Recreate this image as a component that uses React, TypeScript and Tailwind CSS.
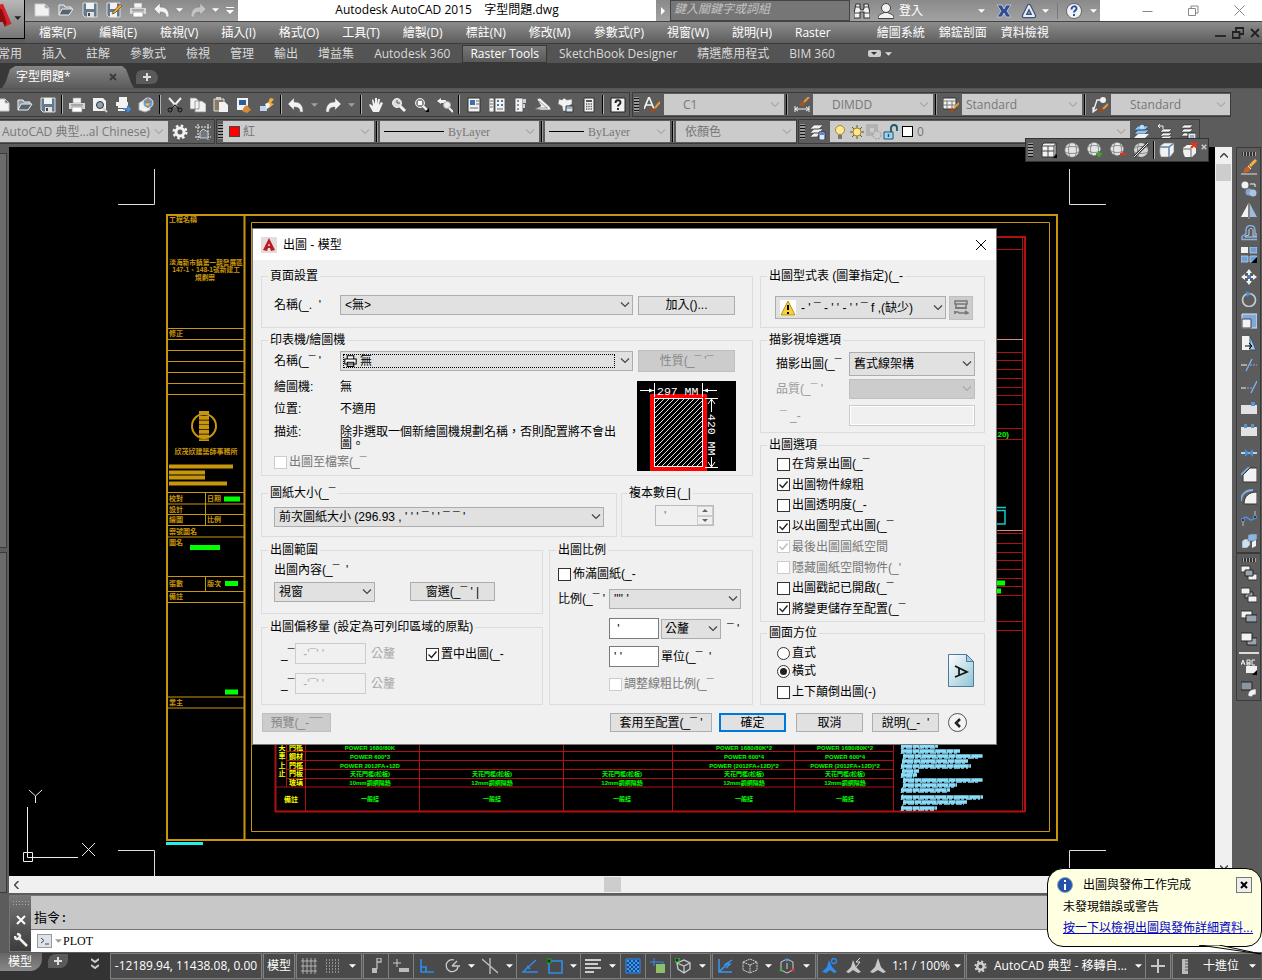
import type { ReactNode } from "react";

const W = "#f2f2f2";
const B = "#3f92e8";
const L = "#bcd6f2";

const art: Record<string, ReactNode> = {
  new: <path d="M1 2h10l4 4v8H1z M11 2v4h4" fill={W} stroke="#c9c9c9" />,
  open: <><path d="M1 13V3h5l1 2h6v3" fill="#8b97a3" stroke={W} /><path d="M1 13l3-6h11l-4 6z" fill="#59636d" stroke={W} /></>,
  save: <><path d="M1 1h14v14H3l-2-2z" fill="#66788c" stroke="#d6dde3" /><path d="M4 1h8v6H4z" fill={W} /><path d="M5 10h7v5H5z" fill="#e0e0e0" /><path d="M6 11h2v3H6z" fill="#444" /></>,
  saveas: <><path d="M1 1h13v14H3l-2-2z" fill="#66788c" stroke="#d6dde3" /><path d="M4 1h7v6H4zM4 10h7v5H4z" fill={W} /><path d="M7 10l7-8 2 2-7 7-3 1z" fill="#f0a535" stroke="#6b4a1c" strokeWidth=".7" /></>,
  print: <><path d="M4 1h8v5H4z" fill={W} stroke="#999" strokeWidth=".6" /><path d="M0 6h16v6H0z" fill="#d6d6d6" /><path d="M2 8h12" stroke="#777" /><path d="M3 10h10v5H3z" fill="#fff" stroke="#888" strokeWidth=".7" /></>,
  undo: <path d="M0 7l6-6v4c6 0 9 3 9 10h-3c0-4-2-5-6-5v3z" fill={W} stroke="#777" strokeWidth=".5" />,
  redo: <path d="M16 7l-6-6v4c-6 0-9 3-9 10h3c0-4 2-5 6-5v3z" fill={W} stroke="#777" strokeWidth=".5" />,
  preview: <><path d="M1 1h10l3 3v10H1z" fill={W} /><circle cx="8" cy="8" r="3.5" fill="#8fa2b5" stroke="#333" /><path d="M11 11l4 4" stroke="#ccc" strokeWidth="2" /></>,
  publish: <><path d="M4 0h8v5H4zM1 5h12v4H1z" fill={W} /><path d="M3 10h9M3 13h7" stroke={W} strokeWidth="2" /><path d="M8 12h6m-2-3l3 3-3 3" stroke={B} strokeWidth="1.6" fill="none" /></>,
  globe3: <><path d="M1 6l5-3 6 2v8l-5 2-6-2z" fill={W} stroke="#aaa" /><circle cx="10" cy="6" r="5" fill="#5aa7d8" stroke="#e8e8e8" /><path d="M10 1v10M6 4c3 2 6 2 8 0" stroke="#e05b2e" fill="none" /><path d="M7 7l3 2 2-3z" fill="#f4cf3a" /></>,
  cut: <><path d="M2 1l8 9M14 1L6 10" stroke={W} strokeWidth="2" /><path d="M8 8l4 4M8 8l-4 4" stroke="#222" strokeWidth="1.4" /><circle cx="3" cy="13" r="2" stroke="#111" fill="none" /><circle cx="13" cy="13" r="2" stroke="#111" fill="none" /></>,
  copy: <path d="M0 1h6l3 3v8H0zM5 4h7l4 3v8H5z" fill={W} stroke="#888" strokeWidth=".8" />,
  paste: <><path d="M1 2h10v12H1z" fill="#8a7a64" stroke="#ddd" /><path d="M3 0h5v3H3z" fill="#ccc" /><path d="M6 5h6l3 3v7H6z" fill={W} /></>,
  match: <><path d="M1 1h11v12H1z" fill={W} /><path d="M3 3h7v5H3z" fill="#2a5c9e" /><path d="M8 10l3-2 4 5-4 3-5-2z" fill="#d88a37" /></>,
  block: <><path d="M1 9h7v5H1z" fill={L} /><path d="M6 7l4-2 2 4-4 3z" fill={W} /><path d="M11 1l4 1-3 4 3 1-5 4 1-4-2-1z" fill="#f2b13e" /></>,
  hand: <path d="M5 15L1 8l1-1 3 2L4 3l1-1 2 5V1h2v6l1-5h2l-1 6 2-3 2 1-4 9z" fill={W} />,
  zoom: <><circle cx="6" cy="6" r="4.5" fill="#ddd" stroke={W} /><path d="M6 3v3h3" stroke="#555" fill="none" /><path d="M9 9l5 5" stroke={W} strokeWidth="3" /></>,
  zoomwin: <><circle cx="6" cy="6" r="4.5" fill="#888" stroke={W} /><path d="M4 4h4v4H4z" fill="#fff" /><path d="M9 9l4 4" stroke={W} strokeWidth="2.4" /><path d="M15 11v4h-4z" fill="#000" /></>,
  zoomprev: <><path d="M0 4l4-3v2h5v3H4v1z" fill={W} /><circle cx="10" cy="8" r="3.5" fill="#e7edf3" stroke="#aaa" /><path d="M12 11l4 4" stroke={W} strokeWidth="2" /></>,
  props: <><path d="M2 1h12v14H2z" fill={W} stroke="#333" /><path d="M4 3h5v5H4z" fill="#3c6fae" /><path d="M10 4h3M10 7h3M4 11h8" stroke="#666" /></>,
  dcenter: <><path d="M0 1h5v14H0zM6 1h10v14H6z" fill={W} stroke="#444" strokeWidth=".8" /><path d="M1 4h3M1 7h3M1 10h3" stroke="#5c6f84" /><path d="M8 3h2v2H8zM12 3h2v2h-2zM8 7h2v2H8zM12 7h2v2h-2z" fill="#5b7696" /><path d="M8 11h6v2H8z" fill="#aaa" /></>,
  palette: <><path d="M3 1h8v14H3z" fill={W} stroke="#444" strokeWidth=".8" /><path d="M5 3h2v2H5zM5 7h2v2H5zM5 11h2v2H5z" fill="#8295a9" /><path d="M11 2h3v4h-3zM11 7h2v4h-2z" fill="#cfcfcf" /></>,
  sheet: <><path d="M2 2l3-1 10 9 1 3H6L0 12l6-3z" fill={W} stroke="#666" strokeWidth=".7" /><path d="M2 11h11M4 4l8 7" stroke="#888" strokeWidth=".8" /></>,
  markup: <><path d="M1 2l3 1 2-2 3 2 5-1v5l-3 2 1 5H5L4 9 0 7z" fill={W} stroke="#666" strokeWidth=".6" /><path d="M8 9h7v6H8z" fill="#dce4ec" stroke="#333" /><path d="M8 11h7" stroke="#5f7c9f" /></>,
  calc: <><path d="M3 1h10v14H3z" fill={W} stroke="#333" /><path d="M5 3h6v2H5z" fill="#555" /><path d="M5 7h6M5 9.5h6M5 12h6" stroke="#555" strokeDasharray="1.3 1" strokeWidth="1.3" /></>,
  help: <><path d="M1 1h14v14H1z" fill={W} stroke="#222" /><path d="M5.500 6c0-3.500 5-3.500 5-.5 0 2-2.500 2-2.500 4M8 11v2" stroke="#222" strokeWidth="1.9" fill="none" /></>,
  textstyle: <><path d="M0 12L5 0l5 12M2 8h6" stroke={W} strokeWidth="1.7" fill="none" /><path d="M16 5l-5 6" stroke="#e79a3a" strokeWidth="2" /><path d="M5 15l3-4 4 1-2 3z" fill="#9b4b1c" /></>,
  dimstyle: <><path d="M1 9v6M15 9v6M1 12h14M4 10l-3 2 3 2M12 10l3 2-3 2" stroke={W} fill="none" /><path d="M15 0l-5 5" stroke="#e79a3a" strokeWidth="2" /><path d="M5 8l3-4 3 2-2 3z" fill="#b3521e" /></>,
  tablestyle: <><path d="M0 1h13v11H0z" fill={W} stroke="#333" /><path d="M0 4h13M0 8h13M4 4v8M9 4v8" stroke="#777" /><path d="M16 6l-5 5" stroke="#e79a3a" strokeWidth="2" /><path d="M6 15l3-4 3 2-2 3z" fill="#9b4b1c" /></>,
  mleader: <><path d="M1 15L5 3h5M1 10v5l4-3" stroke={W} fill="none" strokeWidth="1.300" /><circle cx="11" cy="3" r="3" fill={W} /><path d="M16 7l-5 5" stroke="#e79a3a" strokeWidth="2" /><path d="M6 15l3-4 3 2-2 3z" fill="#9b4b1c" /></>,
  gear: <><circle cx="8" cy="8" r="4" fill="none" stroke={W} strokeWidth="3" /><circle cx="8" cy="8" r="6.300" fill="none" stroke={W} strokeWidth="2.400" strokeDasharray="2.500 2.450" /></>,
  space: <><path d="M3 0v16M13 0v16M0 3h16M0 13h16" stroke={W} strokeDasharray="2 1" /><path d="M5 14V8l3-3 5 3v6z" fill="#6f7880" stroke="#ccc" /></>,
  layers: <><path d="M4 1h9L9 5H0zM4 5h9L9 9H0zM4 9h6l-3 4H0z" fill={W} stroke="#444" strokeWidth=".6" /><path d="M9 8h6v8H9z" fill="#dfeaf5" stroke="#335" /><path d="M10 10h4" stroke={B} strokeWidth="2" /></>,
  layup: <><path d="M4 2h11l-4 4H0zM4 6h11l-4 4H0z" fill="#8fc0ee" stroke="#245" strokeWidth=".6" /><path d="M4 10h11l-4 4H0z" fill={W} /><circle cx="8" cy="3" r="2.300" fill="#b9ddff" /></>,
  layprev: <><path d="M6 5h9l-3 3H3zM6 9h9l-3 3H3zM6 12h9l-3 3H3z" fill={W} stroke="#333" strokeWidth=".6" /><path d="M1 2h5v3M3 0L1 2l2 2" stroke={W} fill="none" /></>,
  laystate: <><path d="M4 1h9l-3 3H1zM4 5h9l-3 3H1zM4 9h9l-3 3H1z" fill={W} stroke="#333" strokeWidth=".6" /><path d="M8 9h8v7H8z" fill="#dfe7ef" stroke="#333" /><path d="M10 12h4M10 14h4" stroke="#678" /></>,
  bulb: <><circle cx="8" cy="6" r="4.500" fill="#ffe79a" stroke="#a8872b" /><path d="M6 11h4v4H6z" fill="#777" /></>,
  sun: <><path d="M8 1v14M1 8h14M3 3l10 10M13 3L3 13" stroke="#6b5416" /><circle cx="8" cy="8" r="4" fill="#ffe68a" stroke="#a8872b" /></>,
  vpfreeze: <><path d="M1 1h10v10H1zM3 3h6v6H3z" fill="none" stroke="#aaa" strokeWidth="1.500" /><circle cx="11" cy="11" r="4" fill="#cbcbcb" stroke="#999" strokeDasharray="2 1" /></>,
  unlock: <><path d="M1 8h9v7H1z" fill="#9ed5f1" stroke="#1d546e" /><path d="M8 8V4c0-4 6-4 6 0v3" stroke="#1d546e" strokeWidth="1.800" fill="none" /><path d="M5.500 10v3" stroke="#1d546e" strokeWidth="1.500" /></>,
  box: <><path d="M1 3l2-2h12v11l-2 3H1z" fill={W} stroke="#333" /><path d="M1 4h12v11M13 4l2-3M7 4v11M1 9h12" stroke="#444" fill="none" /><path d="M16 12v4h-4z" fill="#000" /></>,
  globe: <><circle cx="8" cy="8" r="7" fill="#e4e4e4" stroke="#aaa" strokeWidth=".5" /><path d="M1 6c4-2 10-2 14 0M1 10c4 2 10 2 14 0M6 1c-2 5-2 9 0 14M11 1c2 5 2 9 0 14" stroke="#777" fill="none" strokeWidth=".8" /></>,
  globeadd: <><circle cx="7" cy="7" r="6.500" fill="#e4e4e4" /><path d="M1 5c4-2 9-2 12 0M1 9c4 2 9 2 12 0M5 1c-2 5-2 8 0 12M10 1c2 5 2 8 0 12" stroke="#777" fill="none" strokeWidth=".8" /><path d="M12 9v6M9 12h6" stroke="#43a52b" strokeWidth="2.200" /></>,
  globesub: <><circle cx="7" cy="7" r="6.500" fill="#e4e4e4" /><path d="M1 5c4-2 9-2 12 0M1 9c4 2 9 2 12 0M5 1c-2 5-2 8 0 12M10 1c2 5 2 8 0 12" stroke="#777" fill="none" strokeWidth=".8" /><path d="M10 12h6" stroke="#e0331f" strokeWidth="2.200" /></>,
  globeoff: <><circle cx="8" cy="8" r="7" fill="#d4d4d4" /><path d="M1 6c4-2 10-2 14 0M1 10c4 2 10 2 14 0M6 1c-2 5-2 9 0 14" stroke="#777" fill="none" strokeWidth=".8" /><path d="M15 1L1 15" stroke="#333" strokeWidth="2.500" /><path d="M15 1L1 15" stroke="#eee" /></>,
  cube: <><path d="M1 4l4-3h10v9l-4 5H2c-2-4-1-8-1-11z" fill={W} stroke="#777" strokeWidth=".6" /><path d="M1 5h9l5-4M10 5v10" stroke="#5b83ad" fill="none" strokeWidth="1.500" /></>,
  cubex: <><path d="M1 6l4-3h9v8l-4 4H3c-2-3-2-6-2-9z" fill={W} /><path d="M1 7h8v8" stroke="#666" fill="none" /><path d="M9 0l6 6M15 0L9 6" stroke="#e5341f" strokeWidth="2.200" /></>,
  brush: <><path d="M0 15h16" stroke="#ddd" /><path d="M15 1l-7 7" stroke="#f1b145" strokeWidth="3" /><path d="M8 6l3 3-4 4-5 1 2-5z" fill="#c5622a" /><path d="M7 7l3 3" stroke="#eee" /></>,
  copy2: <><circle cx="4" cy="4" r="3.500" fill={W} /><circle cx="8" cy="11" r="3.500" fill="#86a6cc" /><circle cx="12" cy="12" r="3.500" fill="#a9c6e8" /><path d="M9 3h5v3" stroke={W} fill="none" /></>,
  mirror: <><path d="M7 1v13H0z" fill={W} /><path d="M9 1v13h7z" fill="#9dbbdd" /><path d="M8 0v16" stroke="#ccc" strokeWidth=".7" /></>,
  offset: <><path d="M16 14.500H1v-3l4-3V5c0-6 9-6 9 0v4h2" stroke="#85b3ea" fill="none" strokeWidth="1.400" /><path d="M16 12H4v-1l4-1V5c0-2 4-2 4 0v6h4" stroke="#b9d4f2" fill="none" /></>,
  array: <><path d="M0 0h7v6H0z" fill={W} /><path d="M9 0h7v6H9zM0 9h7v6H0zM9 9h7v6H9z" fill="#6f9fd8" stroke="#b7d3f3" strokeWidth=".8" /><path d="M16 10v6h-6z" fill="#000" /></>,
  move: <><path d="M8 0l3 4H9v8h2l-3 4-3-4h2V4H5zM0 8l4-3v2h8V5l4 3-4 3V9H4v2z" fill={W} /><path d="M6 6h4v4H6z" fill="#467ab8" /></>,
  rotate: <><circle cx="8" cy="9" r="6.500" fill="none" stroke="#c3cad1" strokeWidth="1.700" /><path d="M5 0l5 3-4 3z" fill={B} /></>,
  scale: <><path d="M1 1h15v14H1z" fill="#7fa9db" stroke="#d9e6f5" /><path d="M1 6h9v9H1z" fill={W} stroke="#445" /></>,
  stretch: <><path d="M1 1h8v14H1z" fill={W} /><path d="M9 1l6 14H9z" fill="#9dc3ee" stroke="#356" /><path d="M4 11h6M8 8l3 3-3 3" stroke="#000" fill="none" /></>,
  trim: <><path d="M0 8h6" stroke={W} /><path d="M9 8h7" stroke="#7fb0ea" strokeDasharray="2 1" /><path d="M5 14L11 2" stroke="#7fb0ea" strokeWidth="1.400" /></>,
  extend: <><path d="M0 9h5" stroke={W} /><path d="M6 9h5" stroke="#7fb0ea" strokeDasharray="2 1" /><path d="M10 14l6-12" stroke="#7fb0ea" strokeWidth="1.400" /></>,
  break1: <><path d="M0 4h16v9H0z" fill="#e2e2e2" /><path d="M10 1h4v4h-4z" fill="#5b91d6" /></>,
  break2: <><path d="M0 4h16v9H0z" fill="#e2e2e2" /><path d="M3 1h3v4H3zM10 1h3v4h-3z" fill="#5b91d6" /></>,
  join: <><path d="M0 8h16" stroke={W} strokeWidth="1.500" /><path d="M4 4l4 4-4 4zM12 4L8 8l4 4z" fill={B} /></>,
  chamfer: <><path d="M2 15V8l7-7h7v14z" fill={W} stroke="#333" /><path d="M0 8l8-8" stroke="#7fb0ea" strokeWidth="1.600" /></>,
  fillet: <><path d="M3 15C3 7 8 3 16 3v12z" fill={W} stroke="#333" /><path d="M0 12C0 5 5 1 12 1" stroke="#7fb0ea" fill="none" strokeWidth="2" /></>,
  blend: <><path d="M2 9c3-9 7 6 12-3" stroke="#4f8fdc" fill="none" strokeWidth="1.400" /><path d="M2 15V9M14 6V0" stroke="#bbb" /><circle cx="2" cy="9" r="1.800" fill="#123d80" stroke="#9bc" strokeWidth=".6" /><circle cx="14" cy="6" r="1.800" fill="#123d80" stroke="#9bc" strokeWidth=".6" /></>,
  explode: <><path d="M1 8l3-2h5v6l-3 3H1z" fill="#cfe0f3" stroke="#567" strokeWidth=".5" /><path d="M7 2l3-1h6v5l-3 2H7z" fill="#8db5e1" stroke="#567" strokeWidth=".5" /><path d="M11 9l4-2v6l-4 2z" fill={W} /></>,
  front: <><path d="M0 1h9v6H0zM7 9h9v6H7z" fill={W} stroke="#333" /><path d="M4 5h8v6H4z" fill="#9aa5b0" stroke="#222" /></>,
  back: <><path d="M4 5h8v6H4z" fill="#9aa5b0" stroke="#222" /><path d="M0 1h9v6H0zM7 9h9v6H7z" fill={W} stroke="#333" /></>,
  above: <><path d="M0 2h11v7H0z" fill={W} stroke="#333" /><path d="M5 6h11v7H5z" fill="#98a3ad" stroke="#222" /></>,
  under: <><path d="M6 7h10v7H6z" fill="#98a3ad" stroke="#222" /><path d="M0 2h11v8H0z" fill={W} stroke="#222" /></>,
  abc: <><path d="M5 7h11v7H5z" fill={W} /><path d="M0 6l2-5 2 5M1 4h2M6 1v5h3V4H6h3V1zM14 1h-3v5h3" stroke={W} fill="none" /><path d="M16 11v5h-5z" fill="#000" /></>,
  hatchback: <><path d="M0 1h11v8H0z" fill="#8b959e" stroke="#222" /><path d="M7 15c0-5 3-7 8-7v6c-3-1-4 1-4 2z" fill={W} stroke="#555" strokeWidth=".6" /></>,
  bino: <><path d="M2 1h4v4l1 2h2l1-2V1h4l2 9v5h-6V9H6v6H0v-5z" fill={W} stroke="#333" strokeWidth="1.100" /><path d="M0 10h6M10 10h6M2 4h4M10 4h4" stroke="#444" /></>,
  user: <><circle cx="8" cy="5" r="4.500" fill={W} stroke="#444" /><path d="M0 15.500c0-5 4-4 6-6h4c2 2 6 1 6 6z" fill={W} stroke="#444" /></>,
  exchange: <path d="M1 2h5l2 4 2-4h5l-4 6 4 6h-5l-2-4-2 4H1l4-6z" fill="#304d90" stroke="#c9d4e8" strokeWidth=".8" />,
  a360: <><path d="M8 3L3 13h10z" fill="none" stroke="#3d5378" strokeWidth="4.500" strokeLinejoin="round" /><path d="M8 3L3 13h10z" fill="none" stroke="#e8eef8" strokeWidth="2" strokeLinejoin="round" /></>,
  help2: <><circle cx="8" cy="8" r="7.500" fill={W} stroke="#444" strokeWidth=".7" /><path d="M5.500 6.500c0-4 5-4 5-1 0 2-2.500 2-2.500 4M8 11v2" stroke="#2753a6" strokeWidth="2" fill="none" /></>,
  grid: <path d="M2 0v16M6 0v16M10 0v16M14 0v16M0 3h16M0 8h16M0 13h16" stroke="#c8c8c8" strokeWidth=".8" />,
  dots: <path d="M1 2h15M1 5h15M1 8h15M1 11h15M1 14h15" stroke="#d8d8d8" strokeDasharray="1 2" />,
  infer: <><path d="M9 0h4v4H9zM9 2v9" stroke="#bbb" fill="none" strokeWidth="1.300" /><path d="M4 10h5v5H4z" fill="#bbb" /></>,
  dyn: <><path d="M4 1v8M0 5h8" stroke="#ccc" /><path d="M6 10h10v4H6z" fill="#bbb" /></>,
  ortho: <path d="M2 1v13h13M2 9h5v5" stroke="#2f8df0" fill="none" strokeWidth="1.600" />,
  polar: <path d="M14 9A6 6 0 1 1 10 2M8 8h8M8 8l5-5" stroke="#ccc" fill="none" strokeWidth="1.300" />,
  iso: <path d="M8 0v16M0 1l16 14" stroke="#bbb" strokeWidth="1.400" />,
  track: <path d="M0 14h16M2 13L14 2M5 8l3 3" stroke="#2f8df0" fill="none" strokeWidth="1.600" />,
  osnap: <><path d="M2 3h13v12H2z" stroke="#2f8df0" fill="none" strokeWidth="1.600" /><path d="M0 1h4v4H0z" fill="#063c06" stroke="#2a2" /></>,
  lwt: <path d="M0 2h16M0 6h13M0 10h16M0 14h9" stroke="#ccc" strokeWidth="2" />,
  transp: <><path d="M1 1h14v14H1z" fill="#1c4c86" stroke="#2f8df0" /><path d="M2 3h12M2 7h12M2 11h12" stroke="#3b97f5" strokeWidth="2" strokeDasharray="2 2" /><path d="M4 5h10M4 9h10M4 13h10" stroke="#3b97f5" strokeWidth="2" strokeDasharray="2 2" /></>,
  cycle: <><path d="M4 0v8M0 4h13v3" stroke="#2f8df0" fill="none" /><path d="M6 6h9v9H6z" fill="#8fbf6d" /></>,
  osnap3: <><path d="M2 5l7-3 6 3v6l-6 4-6-4zM2 5l7 3 6-3M9 8v7" stroke="#ccc" fill="none" strokeWidth="1.300" /><path d="M0 0h4v4H0z" fill="#063c06" stroke="#4c4" /></>,
  ucs: <path d="M2 1v13h13M2 14l8-8M15 2l-6 4h4l-4 4" stroke="#3b97f5" fill="none" strokeWidth="1.500" />,
  wirecube: <path d="M1 4l7-3 7 3v8l-7 3-7-3zM1 4l7 3 7-3M8 7v8" stroke="#ccc" fill="none" strokeDasharray="2 .6" />,
  gizmo: <><path d="M2 4l6-3 6 3v8l-6 3-6-3zM8 5v6" stroke="#ccc" fill="none" /><circle cx="8" cy="2" r="1.500" fill={B} /><circle cx="2" cy="12" r="1.500" fill="#3b3" /><circle cx="14" cy="12" r="1.500" fill="#e33" /></>,
  annoB: <><path d="M7 2l3 7 5 5-3 1-4-3-4 3-4-1 5-5z" fill="#2f8df0" /><circle cx="12" cy="3" r="2.500" fill="none" stroke="#2f8df0" strokeWidth="1.300" /></>,
  annoZ: <><path d="M7 2l3 7 5 5-3 1-5-3-4 3-3-1 5-5z" fill="#c8c8c8" /><path d="M14 0l-4 4h4l-4 5" stroke="#ddd" fill="none" /></>,
  anno: <path d="M8 0l3 9 5 5-3 1-5-3-5 3-3-1 5-5z" fill="#c8c8c8" />,
  plus: <path d="M8 1v14M1 8h14" stroke="#c8c8c8" strokeWidth="2" />,
  ruler: <><path d="M5 1h6v15H5z" fill="#bbb" /><path d="M8 3h3M8 6h3M8 9h3M8 12h3" stroke="#555" /></>,
  printer2: <><path d="M4 1h8v4H4zM1 5h14v6H1zM4 9h8v5H4z" fill="#fff" stroke="#000" strokeWidth="1.300" /></>,
  pen: <><path d="M2 1h12v3H2zM3 4h10v4H3z" stroke="#777" fill="none" strokeWidth="1.500" /><path d="M2 8h12M1 12h4l1 1h9M2 11v3M12 11l3 2-3 1" stroke="#777" fill="none" strokeWidth="1.600" /></>,
  warn: <><path d="M0 0h16v16H0z" fill="#fff" /><path d="M8 1l7 14H1z" fill="#f7d33a" stroke="#b58d12" /><path d="M8 5v5M8 12v2" stroke="#000" strokeWidth="2" /></>,
};

function Icon({ n }: { n: string }) {
  return (
    <svg viewBox="0 0 16 16" className="size-4 shrink-0" fill="none" aria-hidden="true">
      {art[n]}
    </svg>
  );
}

function Tool({ n, cls = "w-[23px]" }: { n: string; cls?: string }) {
  return (
    <button type="button" aria-label={n} className={`flex shrink-0 items-center justify-center ${cls}`}>
      <Icon n={n} />
    </button>
  );
}

function Tools({ names }: { names: string }) {
  return (
    <>
      {names.split(" ").map((n, i) =>
        n === "|" ? (
          <span key={i} className="my-[2px] flex w-[6px] justify-center">
            <span className="w-[2px] border-l border-black bg-[#b0b0b0]" />
          </span>
        ) : n === "v" ? (
          <Tri key={i} cls="w-[14px] text-[#a0a0a0]" />
        ) : (
          <Tool key={i} n={n} />
        ),
      )}
    </>
  );
}

function Tri({ cls }: { cls: string }) {
  return (
    <button type="button" aria-label="展開" className={`flex shrink-0 items-center justify-center ${cls}`}>
      <svg viewBox="0 0 8 4" className="h-1 w-[7px]" fill="currentColor" aria-hidden="true">
        <path d="M0 0h8L4 4z" />
      </svg>
    </button>
  );
}

function Chevron({ cls }: { cls: string }) {
  return (
    <svg viewBox="0 0 10 6" className={`pointer-events-none absolute top-1/2 h-[6px] w-[10px] -translate-y-1/2 ${cls}`} fill="none" stroke="currentColor" strokeWidth="1.200" aria-hidden="true">
      <path d="M1 .5l4 4 4-4" />
    </svg>
  );
}

function Grip() {
  return <span className="my-1 w-[5px] shrink-0 bg-[radial-gradient(#111_40%,#999_45%)] bg-[size:2px_3px]" />;
}

function Combo({ text, w, pad = "pl-[4px]", serif = false, label, children }: { text: string; w: string; pad?: string; serif?: boolean; label: string; children?: ReactNode }) {
  return (
    <div className={`relative flex h-[21px] shrink-0 items-center bg-[#cbcbcb] ${w}`}>
      {children}
      <select aria-label={label} className={`h-full w-full min-w-0 flex-1 appearance-none bg-transparent text-[#777] outline-none ${pad} ${serif ? "font-['Liberation_Serif',serif] text-xs" : "text-xs"}`}>
        <option>{text}</option>
      </select>
      <Chevron cls="right-1 text-[#aaa]" />
    </div>
  );
}

function Sep() {
  return <span className="mx-[2px] my-[1px] w-[2px] shrink-0 border-l border-black bg-[#999]" />;
}

function Select({ label, text, w, h = "h-5", disabled = false, pad = "pl-1", children }: { label: string; text: string; w: string; h?: string; disabled?: boolean; pad?: string; children?: ReactNode }) {
  return (
    <div className={`relative shrink-0 ${w} ${h}`}>
      <select id={label} aria-label={label} disabled={disabled} className={`block size-full appearance-none border text-xs leading-4 outline-none ${pad} ${disabled ? "border-[#bfbfbf] bg-[#cccccc] text-[#888]" : "border-[#adadad] bg-[#e1e1e1] text-black"}`}>
        <option>{text}</option>
      </select>
      {children}
      <Chevron cls={`right-[3px] ${disabled ? "text-[#aaa]" : "text-[#444]"}`} />
    </div>
  );
}

function Btn({ children, w, h = "h-[19px]", disabled = false, primary = false }: { children: ReactNode; w: string; h?: string; disabled?: boolean; primary?: boolean }) {
  return (
    <button type="button" disabled={disabled} className={`flex shrink-0 items-center justify-center whitespace-pre text-xs leading-4 ${w} ${h} ${primary ? "border-2 border-[#0078d7] bg-[#e1e1e1]" : disabled ? "border border-[#bfbfbf] bg-[#cccccc] text-[#888]" : "border border-[#adadad] bg-[#e1e1e1]"}`}>
      {children}
    </button>
  );
}

function Check({ text, on = false, disabled = false, radio = false }: { text: string; on?: boolean; disabled?: boolean; radio?: boolean }) {
  return (
    <label className={`flex h-[14px] items-center gap-[2px] whitespace-pre ${disabled ? "text-[#777]" : ""}`}>
      <span className="relative size-[13px] shrink-0">
        <input type={radio ? "radio" : "checkbox"} name={radio ? "orientation" : undefined} defaultChecked={on} disabled={disabled} className={`peer block size-[13px] appearance-none border bg-white ${radio ? "rounded-full" : ""} ${disabled ? "border-[#ccc]" : "border-[#333]"}`} />
        {radio ? (
          <span className="pointer-events-none absolute inset-[3px] hidden rounded-full bg-[#222] peer-checked:block" />
        ) : (
          <svg viewBox="0 0 13 13" className="pointer-events-none absolute inset-0 hidden peer-checked:block" fill="none" stroke={disabled ? "#bbb" : "#222"} strokeWidth="1.400" aria-hidden="true">
            <path d="M2.500 6.500l3 3 5-6" />
          </svg>
        )}
      </span>
      {text}
    </label>
  );
}

function Group({ title, cls, lg = "-ml-[6px]", children }: { title: string; cls: string; lg?: string; children: ReactNode }) {
  return (
    <fieldset className={`shrink-0 border border-[#dcdcdc] ${cls}`}>
      <legend className={`h-4 whitespace-pre px-[2px] leading-4 ${lg}`}>{title}</legend>
      {children}
    </fieldset>
  );
}

function Field({ label, text, cls }: { label: string; text: string; cls: string }) {
  return <input aria-label={label} defaultValue={text} className={`block h-[21px] shrink-0 border text-xs outline-none ${cls}`} />;
}

function PaperPreview() {
  return (
    <svg viewBox="0 0 99 90" className="h-[90px] w-[99px] shrink-0 bg-black" fill="none">
      <defs>
        <pattern id="hatch" width="5" height="5" patternUnits="userSpaceOnUse">
          <path d="M-1 6L6-1" stroke="#fff" strokeWidth=".9" />
        </pattern>
      </defs>
      <rect x="15" y="15" width="53" height="73" stroke="red" strokeWidth="4" />
      <rect x="17.500" y="17.500" width="48" height="68" fill="url(#hatch)" stroke="#fff" />
      <path d="M17.500 2v14M65.500 2v14M3 9.500h14M66 9.500h14M68 17.500h13M68 86.500h13M74.500 18v13M74.500 76v10M71 23l3.500-5 3.500 5M71 81l3.500 5 3.500-5" stroke="#fff" />
      <path d="M17 9.500l-5-2v4zM66 9.500l5-2v4z" fill="#fff" />
      <text x="20" y="14" fill="#fff" fontSize="11.500" fontFamily="Liberation Mono">297 MM</text>
      <text transform="translate(71 33) rotate(90)" fill="#fff" fontSize="11.500" fontFamily="Liberation Mono">420 MM</text>
    </svg>
  );
}

function PlotDialog() {
  return (
    <section role="dialog" aria-label="出圖 - 模型" className="absolute left-[252px] top-[228px] w-[745px] border border-[#777] bg-[#f0f0f0] font-['Liberation_Sans','Noto_Sans_CJK_TC',sans-serif] text-xs leading-4 text-black">
      <header className="flex h-[31px] items-center bg-white pl-2 pr-[9px]">
        <svg viewBox="0 0 16 16" className="mr-[6px] size-4" aria-hidden="true">
          <path d="M0 0h16v16H0z" fill="#e6dcde" />
          <path d="M8 1l6 12-4 1-1-3H7l-1 3-4-1z" fill="#b81b24" />
          <path d="M8 6l1 3H7z" fill="#f3dcdc" />
        </svg>
        <h1 className="flex-1">出圖 - 模型</h1>
        <button type="button" aria-label="關閉">
          <svg viewBox="0 0 12 12" className="size-3" stroke="#000" aria-hidden="true"><path d="M1 1l10 10M11 1L1 11" /></svg>
        </button>
      </header>
      <div className="flex justify-between pl-2 pr-[11px] pt-2">
        <div className="w-[492px]">
          <Group title="頁面設置" cls="h-[60px] px-3">
            <div className="flex items-center pt-[11px]">
              <label htmlFor="頁面名稱" className="w-[66px] whitespace-pre">{"名稱(_.  '"}</label>
              <Select label="頁面名稱" text="<無>" w="w-[293px]" />
              <span className="w-[5px]" />
              <Btn w="w-[97px]">加入()...</Btn>
            </div>
          </Group>
          <Group title="印表機/繪圖機" cls="mt-1 h-[144px] px-3">
            <div className="flex items-center pt-[2px]">
              <label htmlFor="印表機名稱" className="w-[66px] whitespace-pre">{"名稱(_¯ '"}</label>
              <Select label="印表機名稱" text="無" w="w-[293px]" pad="pl-[19px]">
                <span className="pointer-events-none absolute inset-y-[3px] left-[3px] right-[18px] flex items-center border border-dotted border-black">
                  <svg viewBox="0 0 16 16" className="size-[13px]" aria-hidden="true">{art.printer2}</svg>
                </span>
              </Select>
              <span className="w-[5px]" />
              <Btn w="w-[97px]" h="h-[22px]" disabled>{"性質(_¯ '¯"}</Btn>
            </div>
            <div className="flex justify-between pr-1 pt-[4px]">
              <div className="w-[350px]">
                <dl className="grid grid-cols-[66px_1fr]">
                  <dt className="h-[22px] leading-[22px]">繪圖機:</dt><dd className="leading-[22px]">無</dd>
                  <dt className="h-[22px] leading-[22px]">位置:</dt><dd className="leading-[22px]">不適用</dd>
                  <dt className="pt-[6px] leading-3">描述:</dt><dd className="w-[280px] pt-[6px] leading-3">除非選取一個新繪圖機規劃名稱，否則配置將不會出圖。</dd>
                </dl>
                <div className="pt-[5px]"><Check text="出圖至檔案(_¯" disabled /></div>
              </div>
              <div className="pt-[5px]"><PaperPreview /></div>
            </div>
          </Group>
          <div className="flex justify-between pt-[9px]">
            <Group title="圖紙大小(_¯" cls="h-[52px] w-[353px] px-3">
              <div className="pt-[6px]"><Select label="圖紙大小" text="前次圖紙大小 (296.93   , ' ' ' ¯ ' ' ¯ ¯ '" w="w-[330px]" /></div>
            </Group>
            <Group title="複本數目(_|" cls="h-[52px] w-[132px] pl-[14px]" lg="-ml-[9px]">
              <div className="pl-[19px] pt-[4px]">
                <div className="flex w-[59px] border border-[#bbb]">
                  <input aria-label="複本數目" defaultValue="'" disabled className="h-[19px] w-[41px] min-w-0 pl-2 text-[#777]" />
                  <span className="flex flex-1 flex-col">
                    <button type="button" aria-label="增加" className="flex flex-1 items-center justify-center border border-[#ccc]"><span className="border-x-[3px] border-b-[3px] border-x-transparent border-b-[#666]" /></button>
                    <button type="button" aria-label="減少" className="flex flex-1 items-center justify-center border border-[#ccc]"><span className="border-x-[3px] border-t-[3px] border-x-transparent border-t-[#666]" /></button>
                  </span>
                </div>
              </div>
            </Group>
          </div>
          <div className="flex justify-between pt-[5px]">
            <div className="w-[282px]">
              <Group title="出圖範圍" cls="h-[72px] px-3">
                <label htmlFor="出圖內容" className="block h-6 whitespace-pre leading-6">{"出圖內容(_¯  '"}</label>
                <div className="flex gap-[35px]">
                  <Select label="出圖內容" text="視窗" w="w-[101px]" />
                  <Btn w="w-[85px]">{"窗選(_¯ ' |"}</Btn>
                </div>
              </Group>
              <Group title="出圖偏移量 (設定為可列印區域的原點)" cls="mt-[5px] h-[86px] px-3">
                <div className="flex pl-[7px] pt-2">
                  <div className="flex flex-col gap-[9px]">
                    {["X", "Y"].map((k) => (
                      <div key={k} className="flex items-center text-[#aaa]">
                        <span className="w-[14px] text-black">_¯</span>
                        <Field label={k} text=" -'¯' '" cls="w-[71px] border-[#ccc] bg-[#f0f0f0] pl-1 outline outline-1 -outline-offset-2 outline-white" />
                        <span className="pl-[5px]">公釐</span>
                      </div>
                    ))}
                  </div>
                  <div className="pl-[31px] pt-1"><Check text="置中出圖(_-" on /></div>
                </div>
              </Group>
            </div>
            <Group title="出圖比例" cls="h-[163px] w-[204px] px-2" lg="-ml-[2px]">
              <div className="pt-[9px]"><Check text="佈滿圖紙(_-" /></div>
              <div className="flex items-center pt-2">
                <label htmlFor="比例" className="w-[51px] whitespace-pre">{"比例(_¯ '"}</label>
                <Select label="比例" text="'''' '" w="w-[132px]" />
              </div>
              <div className="flex items-center gap-[2px] pl-[51px] pt-[9px]">
                <Field label="數值" text=" '" cls="w-[50px] border-[#7a7a7a] bg-white pl-1" />
                <Select label="單位類型" text="公釐" w="w-[60px]" pad="pl-[3px]" />
                <span className="pl-1">¯ '</span>
              </div>
              <div className="flex items-center gap-[2px] pl-[51px] pt-[7px]">
                <Field label="單位" text="' '" cls="w-[50px] border-[#7a7a7a] bg-white pl-1" />
                <span className="whitespace-pre">{"單位(_¯  '"}</span>
              </div>
              <div className="pl-[51px] pt-[10px]"><Check text="調整線粗比例(_¯" disabled /></div>
            </Group>
          </div>
        </div>
        <div className="w-[225px]">
          <Group title="出圖型式表 (圖筆指定)(_-" cls="h-[60px] pl-[14px] pr-[11px]" lg="-ml-2">
            <div className="flex justify-between pt-3">
              <Select label="出圖型式表" text="- ' ¯ - ' ' - ' ' ¯ f ,(缺少)" w="w-[171px]" h="h-[23px]" pad="pl-[25px] pr-4">
                <svg viewBox="0 0 16 16" className="pointer-events-none absolute left-[5px] top-1 size-4" aria-hidden="true">{art.warn}</svg>
              </Select>
              <button type="button" aria-label="編輯" disabled className="flex h-6 w-6 items-center justify-center border border-[#bfbfbf] bg-[#cccccc]"><Icon n="pen" /></button>
            </div>
          </Group>
          <Group title="描影視埠選項" cls="mt-1 h-[101px] pl-[15px] pr-[9px]" lg="-ml-[9px]">
            <div className="grid grid-cols-[1fr_126px] items-center pt-1 text-[#999]">
              <label htmlFor="描影出圖" className="text-black">描影出圖(_¯</label>
              <Select label="描影出圖" text="舊式線架構" w="w-[126px]" h="h-6" />
              <label htmlFor="品質" className="whitespace-pre pt-[3px]">{"品質(_¯ '"}</label>
              <div className="pt-[3px]"><Select label="品質" text="" w="w-[126px]" disabled /></div>
              <label htmlFor="dpi" className="pl-1 pt-[6px]">¯ _-</label>
              <input id="dpi" disabled className="mt-[6px] h-[21px] w-[126px] border border-[#ccc] bg-[#f0f0f0] outline outline-1 -outline-offset-2 outline-white" />
            </div>
          </Group>
          <Group title="出圖選項" cls="mt-1 h-[185px] pl-4" lg="-ml-[10px]">
            <div className="flex h-[163px] flex-col justify-between pt-1">
              <Check text="在背景出圖(_¯" />
              <Check text="出圖物件線粗" on />
              <Check text="出圖透明度(_-" />
              <Check text="以出圖型式出圖(_¯" on />
              <Check text="最後出圖圖紙空間" on disabled />
              <Check text="隱藏圖紙空間物件(_'" disabled />
              <Check text="出圖戳記已開啟(_¯" />
              <Check text="將變更儲存至配置(_¯" on />
            </div>
          </Group>
          <Group title="圖面方位" cls="mt-[3px] h-[80px] pl-4 pr-[10px]" lg="-ml-[10px]">
            <div className="flex items-center justify-between">
              <div className="pt-[5px]">
                <Check text="直式" radio />
                <div className="pt-1"><Check text="橫式" radio on /></div>
                <div className="pt-[7px]"><Check text="上下顛倒出圖(-)" /></div>
              </div>
              <svg viewBox="0 0 26 33" className="h-[33px] w-[26px]" aria-hidden="true">
                <defs><linearGradient id="pg" x2="1" y2="1"><stop stopColor="#fff" /><stop offset="1" stopColor="#8fc4d4" /></linearGradient></defs>
                <path d="M.5.500h18l7 7v25H.500z" fill="url(#pg)" stroke="#4a7a9c" />
                <path d="M18.500.500v7h7z" fill="#a9c9e8" stroke="#4a7a9c" />
                <path d="M7 12l12 6-12 5M11 14v7" fill="none" stroke="#111" strokeWidth="1.700" />
              </svg>
            </div>
          </Group>
        </div>
      </div>
      <footer className="flex items-center pb-3 pl-[9px] pr-[29px] pt-2">
        <Btn w="w-[69px]" disabled>{"預覽(_-¯¯"}</Btn>
        <span className="flex-1" />
        <Btn w="w-[102px]">{"套用至配置(_¯ '"}</Btn>
        <span className="w-[7px]" />
        <Btn w="w-[67px]" primary>確定</Btn>
        <span className="w-[10px]" />
        <Btn w="w-[67px]">取消</Btn>
        <span className="w-[9px]" />
        <Btn w="w-[67px]">{"說明(_-  '"}</Btn>
        <button type="button" aria-label="較少選項" className="ml-[9px] flex size-[19px] items-center justify-center rounded-full border border-[#555] bg-[#f4f4f4]">
          <svg viewBox="0 0 10 10" className="size-[10px]" fill="none" stroke="#222" strokeWidth="2.500" aria-hidden="true"><path d="M7 1L3 5l4 4" /></svg>
        </button>
      </footer>
    </section>
  );
}

const GOLD = "#c8960c";
const RED = "#b01010";

function Drawing() {
  const rows = [747, 756, 765, 773, 782];
  const cols: [number, string[]][] = [
    [370, ["POWER 1680/80K", "POWER 600*3", "POWER 2012FA+12D", "天花門檻(松板)", "10mm銅網隔熱"]],
    [492, ["", "", "", "天花門檻(松板)", "12mm銅網隔熱"]],
    [622, ["", "", "", "天花門檻(松板)", "12mm銅網隔熱"]],
    [744, ["POWER 1680/80K*2", "POWER 600*4", "POWER (2012FA+12D)*2", "天花門檻(松板)", "12mm銅網隔熱"]],
    [845, ["POWER 1680/80K*2", "POWER 600*4", "POWER (2012FA+12D)*2", "天花門檻(松板)", "12mm銅網隔熱"]],
  ];
  const notes: [number, number, number][] = [[901, 746, 37], [901, 751, 59], [903, 756, 80], [902, 761, 66], [901, 766, 70], [902, 771, 17], [901, 775, 16], [903, 780, 80], [903, 785, 54], [901, 790, 49], [901, 797, 82], [903, 802, 64], [901, 808, 36]];
  return (
    <svg viewBox="9 147 1206 729" className="h-[729px] w-[1206px] max-w-none" fill="none" fontFamily="'Liberation Sans','Noto Sans CJK TC',sans-serif">
      <path d="M154.500 169v35.500H118M1069.500 169v35.500H1106M118 850.500h36.500V876M1069.500 876v-25.500H1106" stroke="#ddd" />
      <path d="M27.500 807v50.500H78M23.500 852.500h9v9h-9zM29 790l6.500 6 6.500-6M35.500 796v7M82 843l13 13M95 843l-13 13" stroke="#eee" />
      <g stroke={GOLD}>
        <path d="M167 215h890v625H167zM244.500 215v625" strokeWidth="2" />
        <path d="M251.500 222.500h798v609h-798z" />
        <path d="M167 328.500h77M167 339.500h77M167 350.500h77M167 361.500h77M167 372.500h77M167 383.500h77M167 394.500h77M167 492.500h77M167 504h77M167 514.500h77M167 525.500h77M167 537h77M167 576.500h77M167 591.500h77M167 602.500h77M167 697h77M167 708h77M205.500 492v33M205.500 576v15" />
        <circle cx="204" cy="426" r="12" strokeWidth="2" />
        <path d="M204 411v30" strokeWidth="10" strokeDasharray="4 .7" />
        <path d="M169 466.500h64M169 472.500h36M169 477.500h36M169 483.500h58" strokeWidth="4" />
      </g>
      <g fill={GOLD} fontSize="7" fontWeight="bold">
        <text x="169" y="222">工程名稱</text>
        <text x="206" y="265" textAnchor="middle" fontSize="6.700">淡海新市鎮第一期發展區</text>
        <text x="206" y="272" textAnchor="middle" fontSize="6.700">147-1、148-1號新建工</text>
        <text x="205" y="280" textAnchor="middle" fontSize="6.700">規劃案</text>
        <text x="169" y="336">修正</text>
        <text x="206" y="454" textAnchor="middle">欣茂欣建築師事務所</text>
        <text x="169" y="501">校對</text><text x="207" y="501">日期</text>
        <text x="169" y="512">設計</text><text x="169" y="522">繪圖</text><text x="207" y="522">比例</text><text x="169" y="534">案號圖名</text><text x="169" y="545">圖名</text>
        <text x="169" y="586">張數</text><text x="207" y="586">版次</text><text x="169" y="599">備註</text><text x="169" y="705">業主</text>
      </g>
      <path d="M224 499h16M225 583.500h13M225 692h13M190 547.500h30" stroke="#0f0" strokeWidth="5" />
      <path d="M166 843.500h37" stroke="#2ee" strokeWidth="3" />
      <g stroke={RED}>
        <path d="M275.500 740v71.500h749.500M997 237h28v575" strokeWidth="2" />
        <path d="M1022.500 237v575M997 249.500h26M997 339.500h26M997 352.500h26M997 360.500h26M997 369.500h26M997 378.500h26M997 387.500h26M997 395.500h26M997 404.500h26M997 428.500h26M997 439.500h26M997 533.500h26M997 543.500h26M997 552.500h26M997 560.500h26M997 569.500h26M997 578.500h26M997 586.500h26M997 595.500h26M997 621.500h26M997 630.500h26" />
        <path d="M286.500 740v47M305.500 740v71M419.500 740v71M563.500 740v71M672.500 740v71M794.500 740v71M893.500 740v71M286 751.500h607M286 760.500h607M286 769.500h607M286 778.500h607M276 787h617" />
      </g>
      <path d="M997 339.500h26M997 530.500h26" stroke="#d88" />
      <path d="M990 510.500h15v13.500h-15M997 507.500h9" stroke="#1cc" strokeWidth="1.500" />
      <path d="M997 583h8M997 591h4" stroke="#0f0" strokeWidth="5" />
      <g fill="#0f0" fontSize="6" fontWeight="bold">
        <text x="1009" y="437" textAnchor="end" fontSize="8">120)</text>
        {cols.map(([x, lines]) => (
          <g key={x} textAnchor="middle">
            {lines.map((t, i) => <text key={i} x={x} y={rows[i] + 3}>{t}</text>)}
            <text x={x} y="801">一般結</text>
          </g>
        ))}
      </g>
      <g fill="#ff0" fontSize="7" fontWeight="bold" textAnchor="middle">
        {["門檻", "鋼材", "門檻", "門板", "玻璃"].map((t, i) => <text key={i} x="296" y={rows[i] + 3}>{t}</text>)}
        <text x="282" y="750">天</text><text x="282" y="758">車</text><text x="282" y="768">上</text><text x="282" y="776">止</text>
        <text x="291" y="802">備註</text>
      </g>
      {notes.map(([x, y, w]) => (
        <g key={y}>
          <path d={`M${x} ${y}h${w}`} stroke="#8adcf8" strokeWidth="3.500" strokeDasharray="11 .4 7 .3 15 .4" />
          <path d={`M${x} ${y + 2}h${w - 3}`} stroke="#8adcf8" strokeWidth="1.500" strokeDasharray="3 2 6 1" />
          <path d={`M${x} ${y + 3}l2-6`} stroke="#8adcf8" />
        </g>
      ))}
    </svg>
  );
}

function TitleBar() {
  const bar = "bg-gradient-to-b from-[#8a8a8a] to-[#a2a2a2]";
  return (
    <div className="flex h-[22px] border-b border-[#444]">
      <div className={`flex w-[213px] items-center pb-px pl-[5px] text-white ${bar}`}>
        {["new", "open", "save", "saveas", "print", "undo"].map((n) => <Tool key={n} n={n} cls="w-6" />)}
        <Tri cls="w-[11px]" />
        <span className="opacity-50"><Tool n="redo" cls="w-[25px]" /></span>
        <Tri cls="w-[11px]" />
        <button type="button" aria-label="自訂" className="flex w-[18px] justify-center"><svg viewBox="0 0 8 7" className="h-[7px] w-2" fill="#fff"><path d="M0 0h8v1H0zM0 3h8L4 7z" /></svg></button>
      </div>
      <div className="flex-1 whitespace-pre bg-white text-center leading-5 text-black">{"Autodesk AutoCAD 2015    字型問題.dwg"}</div>
      <div className={`flex items-center whitespace-nowrap ${bar}`}>
        <button type="button" aria-label="搜尋" className="flex w-[14px] justify-center"><span className="border-y-[4px] border-l-[4px] border-y-transparent border-l-white" /></button>
        <input aria-label="搜尋" placeholder="鍵入關鍵字或詞組" className="h-[21px] w-[180px] border border-[#444] bg-[#767676] pb-1 pl-[3px] italic outline-none placeholder:text-[#c4c4c4]" />
        <div className="flex w-[250px] shrink-0 items-center pl-1 text-white">
          <Icon n="bino" /><span className="w-2" /><Icon n="user" /><button type="button" className="ml-[5px] shrink-0">登入</button>
          <span className="flex-1" />
          <Tri cls="w-[14px]" /><Tool n="exchange" cls="ml-1 w-6" /><Tool n="a360" cls="w-[25px]" /><Tri cls="w-[8px]" />
          <span className="ml-2 h-4 w-px shrink-0 bg-[#777]" /><Tool n="help2" cls="ml-1 w-6" /><Tri cls="w-[14px]" />
        </div>
      </div>
      <div className="flex w-[162px] justify-end bg-white">
        {["M0 6h10", "M0 3h7v7H0zM2.500 3V.500h7v7H7", "M0 0l10 10M10 0L0 10"].map((d) => (
          <button key={d} type="button" aria-label="視窗控制" className="flex w-[46px] items-center justify-center">
            <svg viewBox="-.5 -.5 11 11" className="size-[11px]" fill="none" stroke="#888"><path d={d} /></svg>
          </button>
        ))}
      </div>
    </div>
  );
}

function Header() {
  const menu = ["檔案(F)", "編輯(E)", "檢視(V)", "插入(I)", "格式(O)", "工具(T)", "繪製(D)", "標註(N)", "修改(M)", "參數式(P)", "視窗(W)", "說明(H)", "Raster"];
  const tabs = ["常用", "插入", "註解", "參數式", "檢視", "管理", "輸出", "增益集", "Autodesk 360", "Raster Tools", "SketchBook Designer", "精選應用程式", "BIM 360"];
  return (
    <header>
      <div className="flex">
        <button type="button" aria-label="應用程式功能表" className="flex h-[39px] w-[25px] shrink-0 items-center border-b border-r border-black bg-gradient-to-b from-[#b8b8b8] to-[#777]">
          <svg viewBox="0 0 25 39" className="h-[39px] w-[25px]" aria-hidden="true">
            <path d="M0 4l3-1 9 21-7 3-2-5H0z" fill="#d2232a" /><path d="M0 8l2 1 5 14-2 4-2-5H0z" fill="#8e0b10" /><path d="M15 16h7l-3.500 4z" fill="#222" />
          </svg>
        </button>
        <div className="min-w-0 flex-1">
          <TitleBar />
          <nav className="flex h-[21px] items-center whitespace-nowrap bg-gradient-to-b from-[#8c8c8c] to-[#5e5e5e] pl-[14px] text-white">
            <div className="flex gap-[23px]">{menu.map((m) => <button key={m} type="button">{m}</button>)}</div>
            <div className="ml-[46px] flex gap-[14px]"><button type="button">繪圖系統</button><button type="button">錦鋐剖面</button><button type="button">資料檢視</button></div>
            <div className="ml-auto flex gap-[5px] pr-px">
              {["M0 9h11", "M.5 5h7v6h-7zM4 5V1h7.500v6H8", "M2 2l8 8M10 2l-8 8"].map((d) => (
                <button key={d} type="button" aria-label="文件視窗"><svg viewBox="0 0 12 12" className="size-3" fill="none" stroke="#222" strokeWidth="1.800"><path d={d} /></svg></button>
              ))}
            </div>
          </nav>
        </div>
      </div>
      <nav className="flex h-5 items-center whitespace-nowrap border-t border-[#3c3c3c] bg-[#545454] text-[#dadada]">
        <div className="-ml-3 flex h-[18px] items-center">
          {tabs.map((t) => (
            <button key={t} type="button" className={t === "Raster Tools" ? "mx-[2px] h-[18px] border border-[#383838] bg-gradient-to-b from-[#777] to-[#5a5a5a] px-[7px] leading-4 text-white" : "px-[10px]"}>{t}</button>
          ))}
        </div>
        <span className="ml-[23px] flex h-[7px] w-[13px] items-center justify-center rounded-xs bg-[#ccc]"><span className="border-x-[3px] border-t-[3px] border-x-transparent border-t-[#333]" /></span>
        <Tri cls="ml-1 w-2" />
      </nav>
      <div className="flex h-[25px] items-end bg-[#383838] pl-[2px]">
        <div className="flex h-[22px] w-[132px] items-center bg-gradient-to-b from-[#858585] to-[#5c5c5c] pl-[14px] text-white [clip-path:polygon(0_100%,3%_70%,6%_15%,10%_0,91%_0,94%_15%,98%_80%,100%_100%)]">
          <button type="button">字型問題*</button>
          <button type="button" aria-label="關閉分頁" className="ml-[38px]"><svg viewBox="0 0 8 8" className="size-2" stroke="#3a3a3a" strokeWidth="1.800"><path d="M1 1l6 6M7 1L1 7" /></svg></button>
        </div>
        <button type="button" aria-label="新分頁" className="mb-1 ml-[2px] flex h-[14px] w-[22px] items-center justify-center rounded-tl-md rounded-br-md rounded-tr-lg bg-[#5a5a5a]"><svg viewBox="0 0 8 8" className="size-2" stroke="#ddd" strokeWidth="2"><path d="M4 0v8M0 4h8" /></svg></button>
      </div>
    </header>
  );
}

function Toolbars() {
  const panel = "flex h-[25px] shrink-0 border border-[#3a3a3a]";
  return (
    <div className="flex flex-col gap-[2px] overflow-hidden border-t border-[#555] pt-[3px] pb-[3px]">
      <div className="flex">
        <div className={`-ml-[11px] ${panel}`}><Tools names="new open save | print preview publish globe3 | cut copy paste match block | undo v redo v | hand zoom zoomwin zoomprev | props dcenter palette sheet markup calc | help" /></div>
        <div className={`ml-[2px] items-center ${panel}`}>
          <span className="flex h-full pl-[1px]"><Grip /></span>
          <Tool n="textstyle" cls="w-[25px]" /><Combo label="文字型式" text="C1" w="w-[120px]" pad="pl-[19px]" />
          <span className="flex h-full"><Sep /></span><Tool n="dimstyle" /><Combo label="標註型式" text="DIMDD" w="w-[120px]" pad="pl-[19px]" />
          <span className="flex h-full"><Sep /></span><Tool n="tablestyle" /><Combo label="表格型式" text="Standard" w="w-[120px]" />
          <span className="flex h-full"><Sep /></span><Tool n="mleader" /><Combo label="引線型式" text="Standard" w="w-[119px]" pad="pl-[19px]" />
        </div>
      </div>
      <div className="flex">
        <div className={`items-center border-l-0 ${panel}`}>
          <Combo label="工作區" text="AutoCAD 典型...al Chinese)" w="w-[168px]" pad="pl-[2px]" /><Tool n="gear" /><Tool n="space" />
        </div>
        <div className={`ml-px items-center ${panel}`}>
          <span className="flex h-full pl-[1px]"><Grip /></span>
          <Combo label="顏色" text="紅" w="w-[151px]" pad="pl-[3px]"><span className="ml-[6px] size-[11px] border border-[#444] bg-[#f00]" /></Combo>
          <span className="flex h-full"><Sep /></span><Combo label="線型" text="ByLayer" w="w-[159px]" serif><span className="ml-[4px] h-px w-[60px] shrink-0 bg-black" /></Combo>
          <span className="flex h-full"><Sep /></span><Combo label="線粗" text="ByLayer" w="w-[125px]" serif><span className="ml-[4px] h-px w-[35px] shrink-0 bg-black" /></Combo>
          <span className="flex h-full"><Sep /></span><Combo label="出圖型式" text="依顏色" w="w-[120px]" pad="pl-[9px]" />
        </div>
        <div className={`ml-px items-center ${panel}`}>
          <span className="flex h-full pl-[1px]"><Grip /></span><Tool n="layers" cls="w-[25px]" />
          <Combo label="圖層" text="0" w="w-[300px]" pad="pl-[1px]">
            <span className="flex shrink-0 gap-[1px] pl-[2px]"><Icon n="bulb" /><Icon n="sun" /><Icon n="vpfreeze" /><Icon n="unlock" /></span><span className="mx-[3px] size-[11px] shrink-0 border border-black bg-white" />
          </Combo>
          <Tools names="layup layprev laystate" />
        </div>
      </div>
    </div>
  );
}

function SideBar() {
  const a = "brush copy2 mirror offset array move rotate scale stretch trim extend break1 break2 join chamfer fillet blend explode";
  const dots = <span className="mx-auto mt-1 h-1 w-[14px] shrink-0 bg-[radial-gradient(#aaa_40%,#333_45%)] bg-[size:3px_2px]" />;
  return (
    <aside className="flex w-[30px] shrink-0 flex-col pl-1 pr-px">
      <div className="flex flex-col border border-[#3a3a3a]">{dots}{a.split(" ").map((n) => <Tool key={n} n={n} cls="h-[22px] w-[23px]" />)}</div>
      <div className="flex flex-col border border-[#3a3a3a]">{dots}
        {"front back above under".split(" ").map((n) => <Tool key={n} n={n} cls="h-[22px] w-[23px]" />)}
        <span className="my-[2px] ml-[2px] h-[2px] w-5 bg-[#ddd]" />
        <Tool n="abc" cls="h-[22px] w-[23px]" /><Tool n="hatchback" cls="h-[22px] w-[23px]" />
      </div>
    </aside>
  );
}

function StatusBar() {
  const cell = "flex items-center border-r border-[#808080]";
  const grp = "flex h-[26px] shrink-0 items-stretch border border-r-0 border-[#808080] bg-[#4a4a4a] mr-px";
  const T = "w-[14px] text-white";
  return (
    <footer className="flex h-[27px] shrink-0 overflow-hidden whitespace-nowrap bg-[#5a5a5a] text-white">
      <div className="flex w-[110px] shrink-0 items-start bg-[#333]">
        <button type="button" className="h-[18px] w-[42px] rounded-br-xl bg-gradient-to-b from-[#666] to-[#888] pr-[10px] text-right">模型</button>
        <button type="button" aria-label="新配置" className="ml-[6px] mt-px flex h-[14px] w-5 items-center justify-center rounded-br-lg rounded-tl-lg bg-[#5a5a5a]"><svg viewBox="0 0 8 8" className="size-2" stroke="#ddd" strokeWidth="2"><path d="M4 0v8M0 4h8" /></svg></button>
        <button type="button" aria-label="更多" className="ml-[23px] mt-[5px]"><svg viewBox="0 0 8 12" className="h-3 w-2" fill="none" stroke="#ccc" strokeWidth="2"><path d="M0 1l4 3 4-3M0 7l4 3 4-3" /></svg></button>
      </div>
      <div className={grp}><div className={`w-[151px] justify-center ${cell}`}>-12189.94, 11438.08, 0.00</div></div>
      <div className={grp}><div className={`w-[31px] justify-center ${cell}`}>模型</div></div>
      <div className={grp}><div className={`w-[65px] ${cell}`}><Tool n="grid" cls="w-6" /><Tool n="dots" cls="w-6" /><Tri cls={T} /></div></div>
      <div className={grp}>
        <div className={`w-[25px] ${cell}`}><Tool n="infer" cls="w-6" /></div>
        <div className={`w-[25px] ${cell}`}><Tool n="dyn" cls="w-6" /></div>
        <div className={`w-[103px] ${cell}`}><Tool n="ortho" cls="w-[25px]" /><Tool n="polar" cls="w-[25px]" /><Tri cls={T} /><Tool n="iso" cls="w-6" /><Tri cls={T} /></div>
        <div className={`w-[64px] ${cell}`}><Tool n="track" cls="w-[25px]" /><Tool n="osnap" cls="w-[25px]" /><Tri cls="w-3 text-white" /></div>
        <div className={`w-[40px] ${cell}`}><Tool n="lwt" cls="w-6" /><Tri cls={T} /></div>
        <div className={`w-[25px] ${cell}`}><Tool n="transp" cls="w-6" /></div>
        <div className={`w-[25px] ${cell}`}><Tool n="cycle" cls="w-6" /></div>
        <div className={`w-[40px] ${cell}`}><Tool n="osnap3" cls="w-6" /><Tri cls={T} /></div>
      </div>
      <div className={grp}><div className={`w-[103px] ${cell}`}><Tool n="ucs" cls="w-6" /><Tool n="wirecube" cls="w-[25px]" /><Tri cls="w-3 text-white" /><Tool n="gizmo" cls="w-[25px]" /><Tri cls={T} /></div></div>
      <div className={grp}><div className={`w-[147px] ${cell}`}><Tool n="annoB" cls="w-6" /><Tool n="annoZ" cls="w-6" /><Tool n="anno" cls="w-6" /><button type="button" className="w-[60px] pl-[2px] text-left">1:1 / 100%</button><Tri cls={T} /></div></div>
      <div className={grp}>
        <div className={`w-[179px] ${cell}`}><span className="flex w-[27px] justify-center opacity-80"><svg viewBox="0 0 16 16" className="size-[13px]" fill="none">{art.gear}</svg></span><button type="button" className="w-[137px] overflow-hidden text-left">AutoCAD 典型 - 移轉自...</button><Tri cls={T} /></div>
        <div className={`w-[25px] ${cell}`}><Tool n="plus" cls="w-6" /></div>
      </div>
      <div className={`min-w-0 flex-1 ${grp}`}><div className="flex items-center"><Tool n="ruler" cls="w-6" /><button type="button" className="w-[48px] text-center">十進位</button><Tri cls={T} /></div></div>
    </footer>
  );
}

export default function App() {
  return (
    <div className="relative flex min-h-screen flex-col overflow-hidden bg-[#5c5c5c] font-['Open_Sans','Noto_Sans_CJK_TC',sans-serif] text-xs leading-4 text-black">
      <Header />
      <Toolbars />
      <main className="flex min-h-0 flex-1">
        <div className="flex w-[9px] shrink-0 flex-col gap-1 pt-[6px]">
          <div className="h-[395px] w-[7px] border border-l-0 border-[#3a3a3a] bg-[#6b6b6b]" />
          <div className="w-[7px] flex-1 border border-l-0 border-[#3a3a3a] bg-[#6b6b6b]" />
        </div>
        <div className="flex min-w-0 flex-1 flex-col">
          <div className="flex flex-1">
            <div className="relative min-w-0 flex-1 overflow-hidden bg-black"><Drawing /></div>
            <div className="flex w-[17px] shrink-0 flex-col bg-[#f0f0f0]">
              <button type="button" aria-label="向上捲動" className="flex h-[17px] items-center justify-center"><svg viewBox="0 0 8 5" className="h-[5px] w-2" fill="none" stroke="#444" strokeWidth="1.500"><path d="M0 4.500l4-4 4 4" /></svg></button>
              <span className="mx-px h-[17px] bg-[#cdcdcd]" />
              <button type="button" aria-label="向下捲動" className="mt-auto flex h-[17px] items-center justify-center"><svg viewBox="0 0 8 5" className="h-[5px] w-2" fill="none" stroke="#444" strokeWidth="1.500"><path d="M0 .5l4 4 4-4" /></svg></button>
            </div>
          </div>
          <div className="flex h-[17px] shrink-0 items-center bg-[#f0f0f0] pl-[5px]">
            <button type="button" aria-label="向左捲動"><svg viewBox="0 0 5 8" className="h-2 w-[5px]" fill="none" stroke="#444" strokeWidth="1.500"><path d="M4.500 0l-4 4 4 4" /></svg></button>
            <span className="ml-[48%] h-[15px] w-[17px] bg-[#cdcdcd]" />
          </div>
        </div>
        <SideBar />
      </main>
      <section className="flex h-[60px] shrink-0 pb-[1px] pl-[9px] pt-[2px] font-['Liberation_Mono','Noto_Sans_CJK_TC',monospace]">
        <div className="flex w-[22px] flex-col items-center justify-between border border-r-0 border-[#777] bg-gradient-to-b from-[#777] to-[#3c3c3c] py-1">
          <span className="h-[6px] w-[17px] bg-[radial-gradient(#aaa_40%,transparent_45%)] bg-[size:3px_3px]" />
          <svg viewBox="0 0 10 10" className="size-[10px]" stroke="#fff" strokeWidth="2"><path d="M1 1l8 8M9 1L1 9" /></svg>
          <svg viewBox="0 0 14 14" className="size-[14px]" fill="none" stroke="#eee" strokeWidth="2.500"><path d="M5 5l8 8M1 3c0 3 2 4 4 2s1-4-2-4" /></svg>
        </div>
        <div className="flex min-w-0 flex-1 flex-col">
          <div className="flex-1 border-y border-[#777] bg-[#c8c8c8] pl-[3px] pt-[15px] text-[13px]">指令:</div>
          <div className="flex h-[22px] items-center bg-white pl-[6px]">
            <span className="flex h-[14px] w-[15px] items-center justify-center border border-[#999] bg-[#dde3ea]"><svg viewBox="0 0 10 8" className="h-2 w-[10px]" fill="none" stroke="#444"><path d="M1 1l3 2.500L1 6M5 7h4" /></svg></span>
            <Tri cls="ml-[2px] w-2 text-[#999]" />
            <input aria-label="指令" defaultValue="PLOT" className="ml-px flex-1 font-['Liberation_Serif',serif] outline-none" />
          </div>
        </div>
      </section>
      <StatusBar />
      <div className="absolute left-[1025px] top-[138px] flex h-6 w-[184px] border border-[#333] bg-[#5c5c5c] pl-[2px]">
        <Grip /><span className="w-1 shrink-0" /><Tools names="box globe globeadd globesub globeoff | cube cubex" />
        <button type="button" aria-label="關閉工具列" className="ml-auto mr-px mt-1 h-2 w-[6px]"><svg viewBox="0 0 8 8" className="size-[6px]" stroke="#ccc" strokeWidth="2"><path d="M1 1l6 6M7 1L1 7" /></svg></button>
      </div>
      <PlotDialog />
      <aside className="absolute bottom-[33px] right-0 h-[79px] w-[215px] rounded-2xl border border-black bg-[#ffffe1] pl-[15px] pr-[5px] pt-2 font-['Liberation_Sans','Noto_Sans_CJK_TC',sans-serif]">
        <div className="-ml-[6px] flex items-center">
          <svg viewBox="0 0 16 16" className="size-4" aria-hidden="true"><circle cx="8" cy="8" r="7.500" fill="#2450ae" stroke="#8aa" /><path d="M8 3v2M8 7v6" stroke="#fff" strokeWidth="2" /></svg>
          <h2 className="ml-[10px] flex-1">出圖與發佈工作完成</h2>
          <button type="button" aria-label="關閉通知" className="mr-1 flex size-4 items-center justify-center border border-[#777] bg-[#eee]"><svg viewBox="0 0 8 8" className="size-2" stroke="#000" strokeWidth="2"><path d="M1 1l6 6M7 1L1 7" /></svg></button>
        </div>
        <p className="mt-[6px]">未發現錯誤或警告</p>
        <a href="#report" className="mt-[5px] block whitespace-nowrap text-[#0000c8] underline">按一下以檢視出圖與發佈詳細資料...</a>
        <svg viewBox="0 0 62 12" className="absolute -bottom-[11px] right-0 h-3 w-[62px]" aria-hidden="true"><path d="M0 0l62 9-42-9z" fill="#ffffe1" stroke="#000" /></svg>
      </aside>
    </div>
  );
}
